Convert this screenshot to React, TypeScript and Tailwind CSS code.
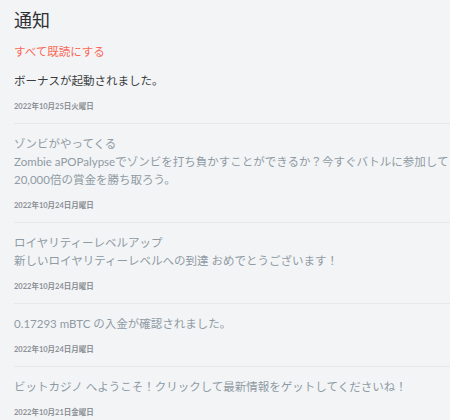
import React from "react";

const font = { fontFamily: '"Lato", "Noto Sans CJK JP", sans-serif' };

type Item = { title?: string; lines: string[]; date: string; unread?: boolean };

const items: Item[] = [
  { lines: ["ボーナスが起動されました。"], date: "2022年10月25日火曜日", unread: true },
  {
    title: "ゾンビがやってくる",
    lines: [
      "Zombie aPOPalypseでゾンビを打ち負かすことができるか？今すぐバトルに参加して",
      "20,000倍の賞金を勝ち取ろう。",
    ],
    date: "2022年10月24日月曜日",
  },
  {
    title: "ロイヤリティーレベルアップ",
    lines: ["新しいロイヤリティーレベルへの到達 おめでとうございます！"],
    date: "2022年10月24日月曜日",
  },
  { lines: ["0.17293 mBTC の入金が確認されました。"], date: "2022年10月24日月曜日" },
  { lines: ["ビットカジノ へようこそ！クリックして最新情報をゲットしてくださいね！"], date: "2022年10月21日金曜日" },
];

export default function App() {
  return (
    <div className="w-[450px] h-[420px] overflow-hidden bg-[#f3f4f6]" style={font}>
      <div className="pl-[14px] w-[520px]">
        <div className="pt-[8px] text-[18px] leading-[24px] text-[#2f3235]">通知</div>
        <div className="mt-[12px] text-[11.5px] leading-[16px] text-[#f96a58]">すべて既読にする</div>
        <div className="mt-[1px]">
          {items.map((it, i) => (
            <div
              key={i}
              className={
                "pt-[11px] pb-[10px] " + (i < items.length - 1 ? "border-b border-[#e6e8ea]" : "")
              }
            >
              <div className={"text-[11.5px] leading-[18px] whitespace-nowrap " + (it.unread ? "text-[#3a3d40]" : "text-[#8f9ba4]")}>
                {it.title && <div>{it.title}</div>}
                {it.lines.map((l, j) => (
                  <div key={j}>{l}</div>
                ))}
              </div>
              <div className="mt-[11px] text-[7.5px] leading-[12px] font-bold text-[#8c9196]">{it.date}</div>
            </div>
          ))}
        </div>
      </div>
    </div>
  );
}
